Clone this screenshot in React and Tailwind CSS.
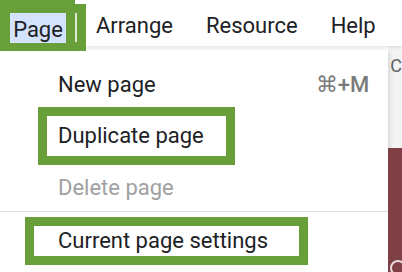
export default function App() {
  const font = { fontFamily: "Roboto, 'Noto Sans', sans-serif" };
  return (
    <div className="w-[402px] h-[272px] overflow-hidden bg-white flex flex-col text-[#202124]" style={font}>
      {/* menu bar */}
      <div className="relative z-10 h-[46px] flex items-start bg-white shadow-[0_1px_3px_rgba(0,0,0,0.12)] text-[22px] leading-none">
        <div className="relative w-[86px] h-[51px] bg-[#689f38] flex items-start shrink-0">
          <div className="absolute right-0 top-0 w-[11px] h-[4px] bg-white" />
          <div className="mt-[13px] ml-[10px] w-[56px] h-[30px] bg-[#d3e3fd] flex items-center justify-center pt-[4px]">
            <span>Page</span>
          </div>
          <div className="mt-[13px] ml-[9px] w-[2px] h-[29px] bg-[#dce8d2]" />
        </div>
        <div className="h-[46px] flex items-center ml-[10px] gap-[33px] pt-[5px]">
          <span>Arrange</span>
          <span>Resource</span>
          <span>Help</span>
        </div>
      </div>
      {/* body */}
      <div className="flex-1 flex">
        <div className="relative z-0 w-[393px] bg-white shadow-[0_2px_6px_rgba(0,0,0,0.2)] mt-[4px] pt-[13px] text-[22px] leading-none">
          <div className="h-[44px] flex items-center justify-between pl-[58px] pr-[19px]">
            <span>New page</span>
            <span className="text-[#7a7a7a] font-medium">⌘+M</span>
          </div>
          <div className="ml-[38px] w-[197px] h-[58px] border-[9px] border-[#689f38] flex items-center pl-[11px]">
            <span>Duplicate page</span>
          </div>
          <div className="h-[46px] flex items-center pl-[58px] text-[#a0a0a0]">
            <span>Delete page</span>
          </div>
          <div className="h-px bg-[#e0e0e0]" />
          <div className="mt-[5px] ml-[25px] w-[283px] h-[48px] border-[9px] border-[#689f38] flex items-center pl-[24px]">
            <span>Current page settings</span>
          </div>
        </div>
        <div className="flex-1 flex flex-col">
          <div className="h-[102px] bg-[#f3f3f3] overflow-hidden pt-[11px] text-[18px] leading-none text-[#5f6368]">
            <span className="ml-[2px]">C</span>
          </div>
          <div className="flex-1 bg-[#7e3f45] relative overflow-hidden">
            <div className="absolute left-[2px] top-[112px] w-[16px] h-[16px] rounded-full border-2 border-[#e8d8d8]" />
          </div>
        </div>
      </div>
    </div>
  );
}
